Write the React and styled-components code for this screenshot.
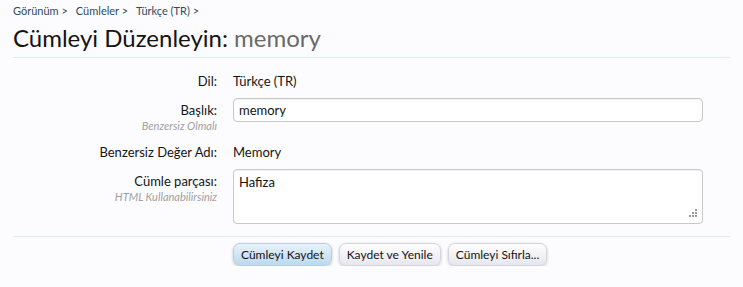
import React from "react";
import styled, { createGlobalStyle } from "styled-components";

const Global = createGlobalStyle`
  html, body { margin: 0; padding: 0; background: #fcfcff; }
  body { font-family: Lato, "Open Sans", sans-serif; color: #141414; }
  * { box-sizing: border-box; }
`;

const Page = styled.div`
  padding: 4px 13px 0 13px;
  width: 743px;
`;

const Crumbs = styled.nav`
  display: flex;
  gap: 8px;
  font-size: 11px;
  line-height: 14px;
  color: #2f4a5e;
`;

const Crumb = styled.span`
  white-space: nowrap;
`;

const Title = styled.h1`
  margin: 5px 0 0 0;
  font-size: 24px;
  font-weight: 400;
  line-height: 30px;
  color: #141414;
  padding-bottom: 4px;
  border-bottom: 1px solid #dcecf7;
  width: 717px;
`;

const Muted = styled.span`
  color: #6a6a6a;
`;

const Form = styled.div`
  display: grid;
  grid-template-columns: 204px 470px;
  column-gap: 16px;
  row-gap: 0;
  padding-top: 14px;
`;

const Label = styled.div`
  text-align: right;
  font-size: 13px;
  line-height: 18px;
  padding-top: ${(p) => p.$pt || 0}px;
`;

const Hint = styled.div`
  font-size: 11px;
  font-style: italic;
  color: #a0a0a0;
  line-height: 13px;
  margin-top: 0;
`;

const Value = styled.div`
  font-size: 13px;
  line-height: 18px;
`;

const Row = styled.div`
  display: contents;
`;

const Spacer = styled.div`
  grid-column: 1 / -1;
  height: ${(p) => p.$h}px;
`;

const Input = styled.div`
  height: 24px;
  border: 1px solid #c8c8c8;
  border-radius: 4px;
  background: #fff;
  font-size: 13px;
  line-height: 22px;
  padding: 0 5px;
  box-shadow: inset 0 1px 1px rgba(0,0,0,0.06);
`;

const TextArea = styled.div`
  position: relative;
  height: 55px;
  border: 1px solid #c8c8c8;
  border-radius: 4px;
  background: #fff;
  font-size: 13px;
  line-height: 18px;
  padding: 3px 5px;
  box-shadow: inset 0 1px 1px rgba(0,0,0,0.06);
`;

const Grip = styled.svg`
  position: absolute;
  right: 5px;
  bottom: 5px;
`;

const Divider = styled.div`
  width: 717px;
  border-top: 1px solid #dcecf7;
  margin-top: 12px;
`;

const Buttons = styled.div`
  display: flex;
  gap: 7px;
  padding-left: 220px;
  margin-top: 6px;
`;

const Button = styled.button`
  height: 23px;
  padding: 0 7px;
  border: 1px solid ${(p) => (p.$primary ? "#b6cfe2" : "#d4d4dc")};
  border-radius: 7px;
  font-family: Lato, "Open Sans", sans-serif;
  font-size: 12px;
  color: #141414;
  background: ${(p) =>
    p.$primary
      ? "linear-gradient(#e8f2fa, #bcd9ee)"
      : "linear-gradient(#ffffff, #e6e6ee)"};
  box-shadow: 0 1px 3px rgba(0,0,0,0.22);
  white-space: nowrap;
`;

export default function App() {
  return (
    <>
      <Global />
      <Page>
        <Crumbs>
          <Crumb>Görünüm &gt;</Crumb>
          <Crumb>Cümleler &gt;</Crumb>
          <Crumb>Türkçe (TR) &gt;</Crumb>
        </Crumbs>
        <Title>
          Cümleyi Düzenleyin: <Muted>memory</Muted>
        </Title>
        <Form>
          <Row>
            <Label>Dil:</Label>
            <Value>Türkçe (TR)</Value>
          </Row>
          <Spacer $h={8} />
          <Row>
            <Label $pt={3}>
              Başlık:
              <Hint>Benzersiz Olmalı</Hint>
            </Label>
            <Input>memory</Input>
          </Row>
          <Spacer $h={11} />
          <Row>
            <Label>Benzersiz Değer Adı:</Label>
            <Value>Memory</Value>
          </Row>
          <Spacer $h={8} />
          <Row>
            <Label $pt={3}>
              Cümle parçası:
              <Hint>HTML Kullanabilirsiniz</Hint>
            </Label>
            <TextArea>
              Hafiza
              <Grip width="9" height="9" viewBox="0 0 9 9">
                <g fill="#9a9a9a">
                  <rect x="7" y="0" width="2" height="2" />
                  <rect x="4" y="3" width="2" height="2" />
                  <rect x="7" y="3" width="2" height="2" />
                  <rect x="1" y="6" width="2" height="2" />
                  <rect x="4" y="6" width="2" height="2" />
                  <rect x="7" y="6" width="2" height="2" />
                </g>
              </Grip>
            </TextArea>
          </Row>
        </Form>
        <Divider />
        <Buttons>
          <Button $primary>Cümleyi Kaydet</Button>
          <Button>Kaydet ve Yenile</Button>
          <Button>Cümleyi Sıfırla...</Button>
        </Buttons>
      </Page>
    </>
  );
}
